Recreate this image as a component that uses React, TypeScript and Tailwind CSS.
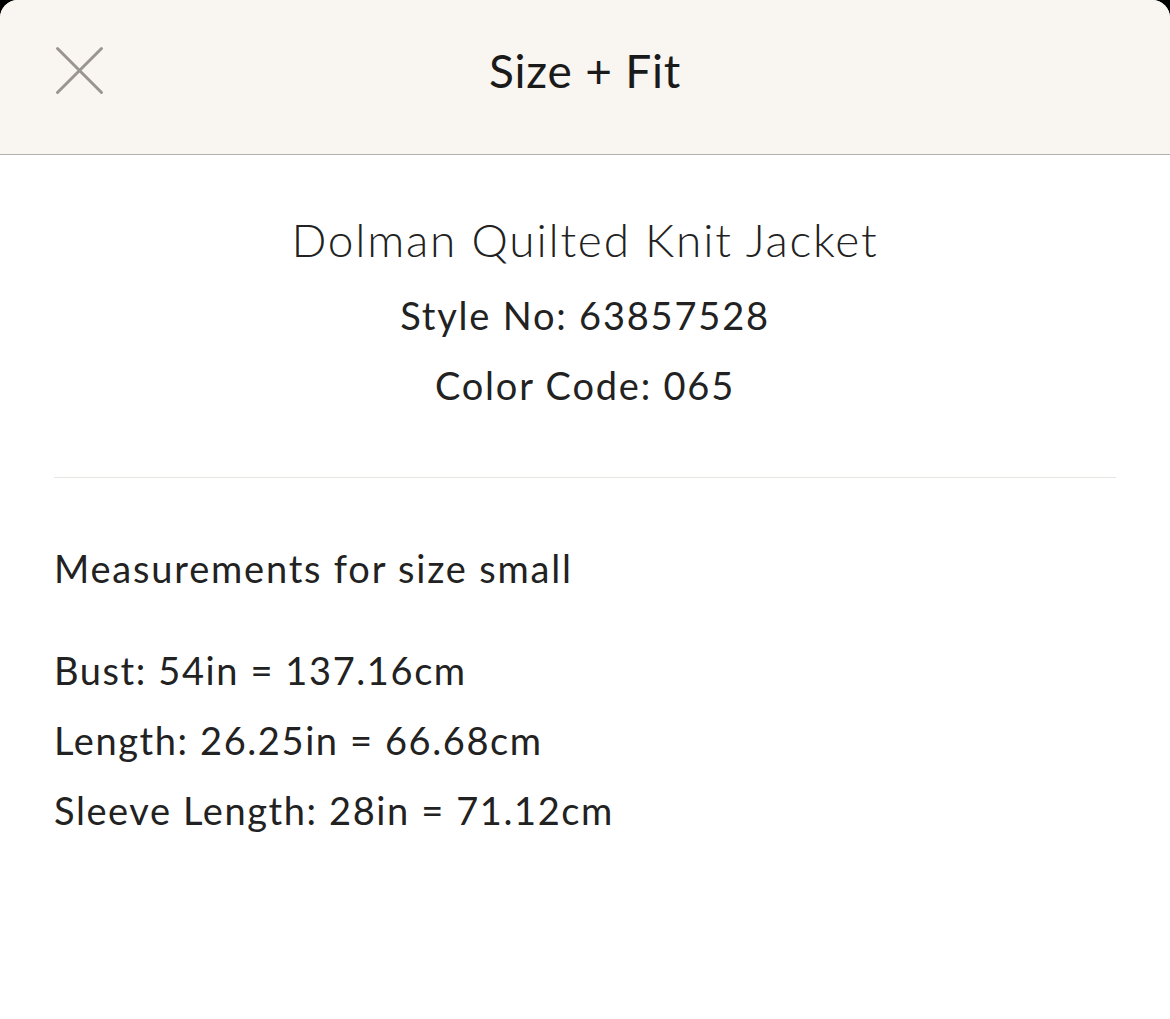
const measurements = [
  "Bust: 54in = 137.16cm",
  "Length: 26.25in = 66.68cm",
  "Sleeve Length: 28in = 71.12cm",
];

function CloseIcon() {
  return (
    <svg width="49" height="49" viewBox="0 0 49 49" fill="none" stroke="#9a958f" strokeWidth="3" strokeLinecap="round">
      <path d="M2.5 2.5L46.5 46.5M46.5 2.5L2.5 46.5" />
    </svg>
  );
}

export default function App() {
  return (
    <div className="min-h-[1019px] bg-black font-['Lato','Liberation_Sans',sans-serif] text-[#222222]">
      <div className="min-h-[1019px] overflow-hidden rounded-t-[18px] bg-white">
        <header className="relative flex h-[155px] items-center justify-center border-b border-[#b4b1ad] bg-[#f9f5f1] pb-[14px]">
          <button className="absolute left-[55px] top-[46px]" aria-label="Close">
            <CloseIcon />
          </button>
          <h1 className="text-[46px] font-normal tracking-[0.8px] text-[#1a1a1a]">Size + Fit</h1>
        </header>

        <main className="px-[54px] pt-[50px]">
          <div className="text-center">
            <h2 className="text-[46px] font-light leading-[70px] tracking-[1.8px]">
              Dolman Quilted Knit Jacket
            </h2>
            <div className="mt-[5px] text-[38px] leading-[70px] tracking-[1.8px]">
              <p>Style No: 63857528</p>
              <p>Color Code: 065</p>
            </div>
          </div>

          <div className="mt-[57px] h-px bg-[#e8e5e0]" />

          <p className="mt-[55px] text-[38px] leading-[70px] tracking-[1.8px]">
            Measurements for size small
          </p>

          <div className="mt-[32px] text-[38px] leading-[70px] tracking-[1.6px]">
            {measurements.map((m) => (
              <p key={m}>{m}</p>
            ))}
          </div>
        </main>
      </div>
    </div>
  );
}
